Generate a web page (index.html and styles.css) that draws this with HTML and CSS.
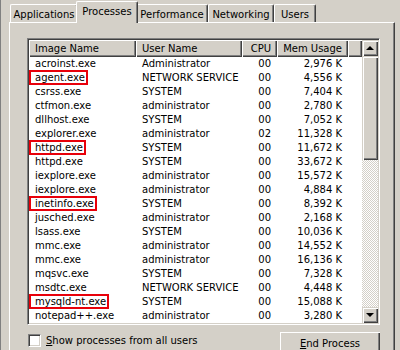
FILE: index.html
```html
<!DOCTYPE html>
<html lang="en">
<head>
    <meta charset="UTF-8">
    <title>Windows Task Manager - Processes</title>
    <link rel="stylesheet" href="styles.css">
</head>
<body>
    <div class="window">
        <!-- Tab strip -->
        <div class="tabs">
            <div class="tab tab-apps">Applications</div>
            <div class="tab tab-proc active">Processes</div>
            <div class="tab tab-perf">Performance</div>
            <div class="tab tab-net">Networking</div>
            <div class="tab tab-users">Users</div>
        </div>

        <!-- Processes page -->
        <div class="panel">
            <div class="listview">
                <div class="list-main">
                    <table class="procs">
                        <colgroup>
                            <col class="c-name">
                            <col class="c-user">
                            <col class="c-cpu">
                            <col class="c-mem">
                            <col class="c-pad">
                        </colgroup>
                        <thead>
                            <tr>
                                <th>Image Name</th>
                                <th>User Name</th>
                                <th class="num-h">CPU</th>
                                <th class="num-h">Mem Usage</th>
                                <th></th>
                            </tr>
                        </thead>
                        <tbody>
                            <tr><td>acroinst.exe</td><td>Administrator</td><td class="num">00</td><td class="num">2,976 K</td><td></td></tr>
                            <tr><td><span class="mark">agent.exe</span></td><td>NETWORK SERVICE</td><td class="num">00</td><td class="num">4,556 K</td><td></td></tr>
                            <tr><td>csrss.exe</td><td>SYSTEM</td><td class="num">00</td><td class="num">7,404 K</td><td></td></tr>
                            <tr><td>ctfmon.exe</td><td>administrator</td><td class="num">00</td><td class="num">2,780 K</td><td></td></tr>
                            <tr><td>dllhost.exe</td><td>SYSTEM</td><td class="num">00</td><td class="num">7,052 K</td><td></td></tr>
                            <tr><td>explorer.exe</td><td>administrator</td><td class="num">02</td><td class="num">11,328 K</td><td></td></tr>
                            <tr><td><span class="mark">httpd.exe</span></td><td>SYSTEM</td><td class="num">00</td><td class="num">11,672 K</td><td></td></tr>
                            <tr><td>httpd.exe</td><td>SYSTEM</td><td class="num">00</td><td class="num">33,672 K</td><td></td></tr>
                            <tr><td>iexplore.exe</td><td>administrator</td><td class="num">00</td><td class="num">15,572 K</td><td></td></tr>
                            <tr><td>iexplore.exe</td><td>administrator</td><td class="num">00</td><td class="num">4,884 K</td><td></td></tr>
                            <tr><td><span class="mark">inetinfo.exe</span></td><td>SYSTEM</td><td class="num">00</td><td class="num">8,392 K</td><td></td></tr>
                            <tr><td>jusched.exe</td><td>administrator</td><td class="num">00</td><td class="num">2,168 K</td><td></td></tr>
                            <tr><td>lsass.exe</td><td>SYSTEM</td><td class="num">00</td><td class="num">10,036 K</td><td></td></tr>
                            <tr><td>mmc.exe</td><td>administrator</td><td class="num">00</td><td class="num">14,552 K</td><td></td></tr>
                            <tr><td>mmc.exe</td><td>administrator</td><td class="num">00</td><td class="num">16,136 K</td><td></td></tr>
                            <tr><td>mqsvc.exe</td><td>SYSTEM</td><td class="num">00</td><td class="num">7,328 K</td><td></td></tr>
                            <tr><td>msdtc.exe</td><td>NETWORK SERVICE</td><td class="num">00</td><td class="num">4,448 K</td><td></td></tr>
                            <tr><td><span class="mark">mysqld-nt.exe</span></td><td>SYSTEM</td><td class="num">00</td><td class="num">15,088 K</td><td></td></tr>
                            <tr><td>notepad++.exe</td><td>administrator</td><td class="num">00</td><td class="num">3,280 K</td><td></td></tr>
                        </tbody>
                    </table>
                </div>

                <!-- Vertical scrollbar -->
                <div class="scrollbar">
                    <div class="sb-btn"><span class="arrow-up"></span></div>
                    <div class="sb-thumb"></div>
                    <div class="sb-track"></div>
                    <div class="sb-btn"><span class="arrow-down"></span></div>
                </div>
            </div>

            <div class="footer">
                <label class="check">
                    <span class="check-box"></span>
                    <span><u>S</u>how processes from all users</span>
                </label>
                <button class="end-btn"><u>E</u>nd Process</button>
            </div>
        </div>
    </div>
</body>
</html>
```

FILE: styles.css
```css
body {
    margin: 0;
    padding: 0;
    background-color: #d4d0c8;
    font-family: "DejaVu Sans", Verdana, sans-serif;
    font-size: 10px;
    color: #000;
    overflow: hidden;
}

.window {
    height: 350px;
    border-left: 1px solid #808080;
}

/* Tabs */
.tabs {
    display: flex;
    align-items: flex-end;
    height: 22px;
    padding-left: 9px;
}

.tab {
    height: 18px;
    line-height: 19px;
    text-align: center;
    background-color: #d4d0c8;
    box-sizing: border-box;
    border-top: 1px solid #fff;
    border-left: 1px solid #fff;
    border-right: 1px solid #404040;
    border-top-left-radius: 2px;
    border-top-right-radius: 2px;
    box-shadow: inset -1px 0 #808080;
}

.tab-apps { width: 68px; }
.tab-proc { width: 62px; }
.tab-perf { width: 72px; }
.tab-net { width: 66px; }
.tab-users { width: 42px; }

.tab.active {
    height: 22px;
    line-height: 19px;
    margin: 0 -2px -1px -2px;
    position: relative;
    z-index: 1;
}

/* Panel */
.panel {
    margin-left: 8px;
    width: 386px;
    height: 340px;
    box-sizing: border-box;
    border-top: 1px solid #fff;
    border-left: 1px solid #fff;
    border-right: 1px solid #404040;
    box-shadow: inset -1px 0 #808080;
    padding: 15px 0 0 17px;
}

/* List view */
.listview {
    display: flex;
    width: 353px;
    height: 287px;
    box-sizing: border-box;
    background-color: #fff;
    border-top: 1px solid #808080;
    border-left: 1px solid #808080;
    border-right: 1px solid #fff;
    border-bottom: 1px solid #fff;
    box-shadow: inset 1px 1px #404040, inset -1px -1px #d4d0c8;
    padding: 1px;
}

.list-main {
    flex-grow: 1;
    overflow: hidden;
}

.procs {
    border-collapse: collapse;
    table-layout: fixed;
    width: 333px;
}

.c-name { width: 107px; }
.c-user { width: 106px; }
.c-cpu { width: 35px; }
.c-mem { width: 71px; }
.c-pad { width: 14px; }

.procs th {
    height: 17px;
    padding: 0 0 0 6px;
    font-weight: normal;
    text-align: left;
    white-space: nowrap;
    background-color: #d4d0c8;
    box-shadow: inset 1px 1px #fff, inset -1px -1px #404040, inset -2px -2px #808080;
}

.procs th.num-h {
    text-align: right;
    padding: 0 6px 0 0;
}

.procs td {
    height: 14px;
    line-height: 14px;
    padding: 0 0 0 6px;
    white-space: nowrap;
}

.procs td.num {
    text-align: right;
    padding: 0 6px 0 0;
}

.mark {
    display: inline-block;
    height: 15px;
    line-height: 12px;
    box-sizing: border-box;
    border: 2px solid #e8000a;
    padding: 0 1px 0 4px;
    margin: -1px 0 -1px -6px;
    vertical-align: top;
}

/* Scrollbar */
.scrollbar {
    width: 16px;
    display: flex;
    flex-direction: column;
}

.sb-btn,
.sb-thumb {
    background-color: #d4d0c8;
    box-sizing: border-box;
    box-shadow: inset 1px 1px #d4d0c8, inset 2px 2px #fff, inset -1px -1px #404040, inset -2px -2px #808080;
}

.sb-btn {
    height: 16px;
    display: flex;
    align-items: center;
    justify-content: center;
}

.sb-thumb {
    height: 104px;
}

.sb-track {
    flex-grow: 1;
    background: repeating-conic-gradient(#fff 0 25%, #d4d0c8 0 50%) 0 0 / 2px 2px;
}

.arrow-up,
.arrow-down {
    width: 0;
    height: 0;
    border-left: 4px solid transparent;
    border-right: 4px solid transparent;
}

.arrow-up {
    border-bottom: 4px solid #000;
    margin-top: -1px;
}

.arrow-down {
    border-top: 4px solid #000;
}

/* Footer */
.footer {
    display: flex;
    justify-content: space-between;
    align-items: flex-start;
    width: 353px;
    margin-top: 7px;
}

.check {
    display: flex;
    align-items: center;
    gap: 5px;
    margin-top: 2px;
    margin-left: 1px;
    line-height: 13px;
}

.check-box {
    width: 13px;
    height: 13px;
    box-sizing: border-box;
    background-color: #fff;
    border-top: 1px solid #808080;
    border-left: 1px solid #808080;
    border-right: 1px solid #fff;
    border-bottom: 1px solid #fff;
    box-shadow: inset 1px 1px #404040, inset -1px -1px #d4d0c8;
}

.end-btn {
    width: 100px;
    height: 23px;
    padding: 0;
    font-family: inherit;
    font-size: 10px;
    color: #000;
    background-color: #d4d0c8;
    border: none;
    box-shadow: inset 1px 1px #fff, inset -1px -1px #404040, inset -2px -2px #808080;
}
```
